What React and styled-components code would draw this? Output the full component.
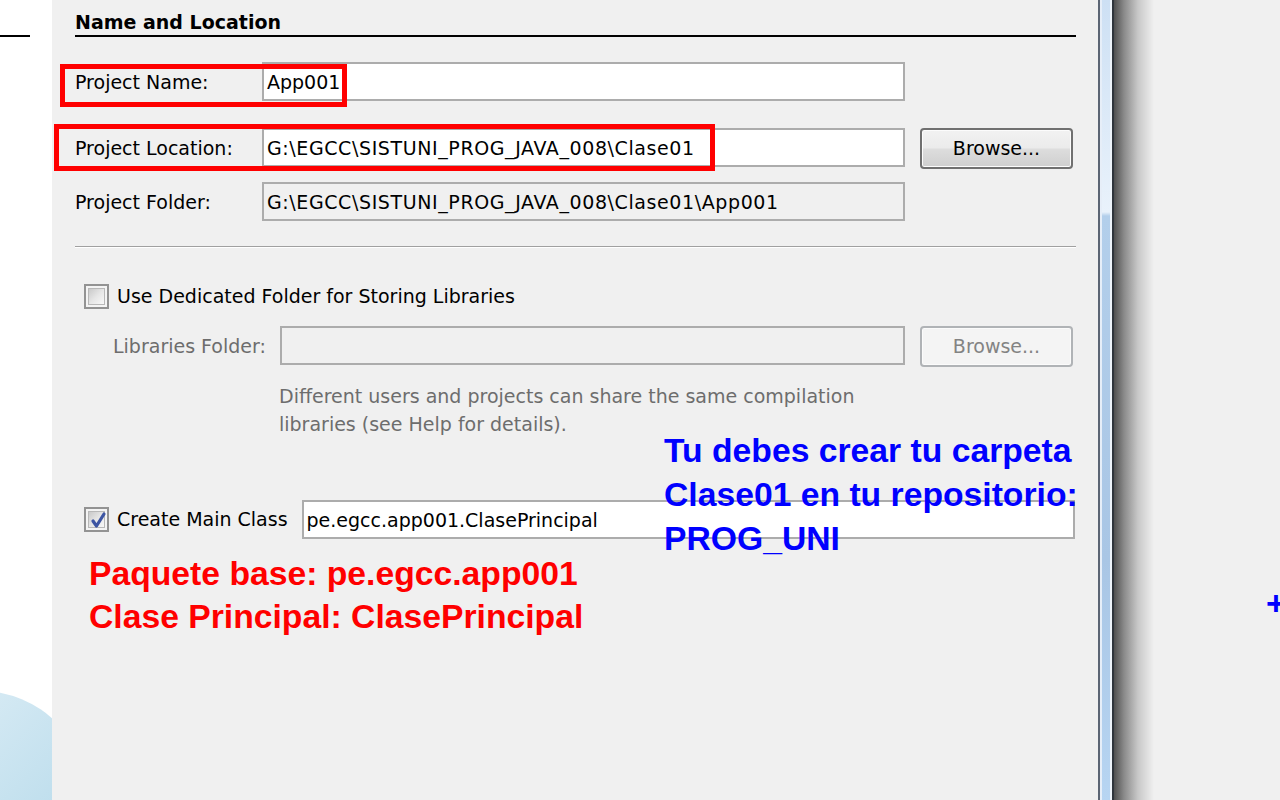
import React from "react";
import styled, { createGlobalStyle } from "styled-components";

const GlobalStyle = createGlobalStyle`
  html, body {
    margin: 0;
    padding: 0;
    background: #f0f0f0;
    overflow: hidden;
  }
`;

const Screen = styled.div`
  display: flex;
  width: 1280px;
  height: 800px;
  overflow: hidden;
`;

const Margin = styled.aside`
  width: 52px;
  flex-shrink: 0;
  background: #ffffff;
  display: flex;
  flex-direction: column;
  justify-content: space-between;
`;

const MarginRule = styled.div`
  margin-top: 35px;
  width: 30px;
  height: 2px;
  background: #000000;
`;

const Dialog = styled.main`
  position: relative;
  width: 1046px;
  flex-shrink: 0;
  box-sizing: border-box;
  padding-left: 23px;
  background: #f0f0f0;
  font-family: "DejaVu Sans", "Liberation Sans", sans-serif;
  font-size: 19px;
  color: #000000;
`;

const Header = styled.div`
  width: 1001px;
  padding-top: 10px;
  height: 25px;
  line-height: 25px;
  border-bottom: 2px solid #000000;
  font-weight: bold;
`;

const Row = styled.div`
  display: flex;
  align-items: ${(p) => p.$align || "flex-start"};
  margin-top: ${(p) => p.$top}px;
  padding-left: ${(p) => p.$indent || 0}px;
`;

const Label = styled.span`
  width: ${(p) => p.$width}px;
  height: 39px;
  flex-shrink: 0;
  line-height: 41px;
  white-space: nowrap;
  color: ${(p) => (p.$disabled ? "#6d6d6d" : "#000000")};
`;

const TextBox = styled.div`
  width: ${(p) => p.$width}px;
  height: 39px;
  flex-shrink: 0;
  box-sizing: border-box;
  border: 2px solid #acacac;
  background: ${(p) => (p.$muted ? "#f0f0f0" : "#ffffff")};
  padding-left: 3px;
  line-height: 36px;
  white-space: nowrap;
  overflow: hidden;
  letter-spacing: ${(p) => (p.$wide ? "0.6px" : "0")};
  margin-left: ${(p) => p.$gap || 0}px;
`;

const Button = styled.div`
  width: 153px;
  height: 41px;
  margin-left: 15px;
  flex-shrink: 0;
  box-sizing: border-box;
  border: 2px solid ${(p) => (p.$disabled ? "#b0b3b6" : "#707070")};
  border-radius: 4px;
  box-shadow: inset 0 0 0 1px ${(p) => (p.$disabled ? "#fbfbfb" : "#fcfcfc")};
  background: ${(p) =>
    p.$disabled
      ? "#f4f4f4"
      : "linear-gradient(to bottom, #f2f2f2 0%, #ebebeb 48%, #dddddd 52%, #cfcfcf 100%)"};
  color: ${(p) => (p.$disabled ? "#838383" : "#000000")};
  text-align: center;
  line-height: 37px;
`;

const Separator = styled.div`
  width: 1001px;
  margin-top: 25px;
  height: 1px;
  background: #a0a0a0;
  border-bottom: 1px solid #ffffff;
`;

const CheckText = styled.span`
  margin-left: 8px;
  line-height: 25px;
  white-space: nowrap;
`;

const Box = styled.span`
  position: relative;
  display: inline-flex;
  width: 25px;
  height: 25px;
  flex-shrink: 0;
  box-sizing: border-box;
  border: 2px solid #939393;
  background: #f4f4f4;
  padding: 2px;
`;

const BoxInner = styled.span`
  flex: 1;
  border: 1px solid #b8b8b8;
  background: linear-gradient(135deg, #c9c9c9 0%, #e6e6e6 50%, #f8f8f8 100%);
`;

const Tick = styled.svg`
  position: absolute;
  left: 2px;
  top: 1px;
`;

const Help = styled.p`
  margin: 15px 0 0 204px;
  line-height: 28px;
  color: #6d6d6d;
`;

const Note = styled.div`
  font-family: "Liberation Sans", Arial, sans-serif;
  font-weight: bold;
  font-size: 33.7px;
  line-height: ${(p) => p.$lh}px;
  color: ${(p) => p.$color};
  white-space: nowrap;
`;

const RedNote = styled(Note)`
  margin: 13px 0 0 14px;
`;

const BlueNote = styled(Note)`
  position: absolute;
  left: 612px;
  top: 428px;
`;

const Callout = styled.div`
  position: absolute;
  box-sizing: border-box;
  left: ${(p) => p.$x}px;
  top: ${(p) => p.$y}px;
  width: ${(p) => p.$w}px;
  height: ${(p) => p.$h}px;
  border: 5px solid #ff0000;
`;

const Frame = styled.div`
  display: flex;
  flex-shrink: 0;
  border-left: 2px solid #5b6574;
  border-right: 2px solid #2f353c;
`;

const FrameGlass = styled.div`
  width: 8px;
  border-left: 2px solid #e6eef8;
  border-right: 2px solid #eef4fb;
  background: linear-gradient(
    to bottom,
    #cde0f4 0px,
    #e9f2fb 212px,
    #b3cfeb 216px,
    #a9c6e5 560px,
    #b7d5f2 800px
  );
`;

const Shadow = styled.div`
  width: 40px;
  flex-shrink: 0;
  background: linear-gradient(to right, #505050 0%, #8a8a8a 25%, #c8c8c8 60%, #f0f0f0 100%);
`;

const Desktop = styled.div`
  flex: 1;
  overflow: hidden;
  background: #f0f0f0;
  padding: 584px 0 0 112px;
`;

const Plus = styled.span`
  font-family: "Liberation Sans", Arial, sans-serif;
  font-weight: bold;
  font-size: 34px;
  color: #0000ff;
`;

const Checkbox = ({ checked }) => (
  <Box>
    <BoxInner />
    {checked && (
      <Tick width="21" height="21" viewBox="0 0 21 21">
        <path d="M5 11 L8.5 16 L16 4" fill="none" stroke="#3d55a3" strokeWidth="3.2" strokeLinecap="round" strokeLinejoin="round" />
      </Tick>
    )}
  </Box>
);

const Bubble = () => (
  <svg width="52" height="112" viewBox="0 0 52 112">
    <defs>
      <linearGradient id="bubble" x1="0" y1="0" x2="1" y2="1">
        <stop offset="0" stopColor="#e4f1f8" />
        <stop offset="1" stopColor="#aed6e8" />
      </linearGradient>
    </defs>
    <circle cx="-20" cy="112" r="109" fill="url(#bubble)" />
  </svg>
);

export default function App() {
  return (
    <>
      <GlobalStyle />
      <Screen>
        <Margin>
          <MarginRule />
          <Bubble />
        </Margin>

        <Dialog>
          <Header>Name and Location</Header>

          <Row $top={25}>
            <Label $width={187}>Project Name:</Label>
            <TextBox $width={643}>App001</TextBox>
          </Row>

          <Row $top={27}>
            <Label $width={187}>Project Location:</Label>
            <TextBox $width={643} $wide>
              G:\EGCC\SISTUNI_PROG_JAVA_008\Clase01
            </TextBox>
            <Button>Browse...</Button>
          </Row>

          <Row $top={13}>
            <Label $width={187}>Project Folder:</Label>
            <TextBox $width={643} $muted $wide>
              G:\EGCC\SISTUNI_PROG_JAVA_008\Clase01\App001
            </TextBox>
          </Row>

          <Separator />

          <Row $top={36} $indent={9} $align="center">
            <Checkbox />
            <CheckText>Use Dedicated Folder for Storing Libraries</CheckText>
          </Row>

          <Row $top={17} $indent={38}>
            <Label $width={167} $disabled>
              Libraries Folder:
            </Label>
            <TextBox $width={625} $muted />
            <Button $disabled>Browse...</Button>
          </Row>

          <Help>
            Different users and projects can share the same compilation
            <br />
            libraries (see Help for details).
          </Help>

          <Row $top={62} $indent={9} $align="center">
            <Checkbox checked />
            <CheckText>Create Main Class</CheckText>
            <TextBox $width={773} $gap={14}>
              pe.egcc.app001.ClasePrincipal
            </TextBox>
          </Row>

          <RedNote $color="#ff0000" $lh={43}>
            Paquete base: pe.egcc.app001
            <br />
            Clase Principal: ClasePrincipal
          </RedNote>

          <BlueNote $color="#0000ff" $lh={44}>
            Tu debes crear tu carpeta
            <br />
            Clase01 en tu repositorio:
            <br />
            PROG_UNI
          </BlueNote>

          <Callout $x={8} $y={64} $w={287} $h={43} />
          <Callout $x={2} $y={124} $w={661} $h={47} />
        </Dialog>

        <Frame>
          <FrameGlass />
        </Frame>
        <Shadow />
        <Desktop>
          <Plus>+</Plus>
        </Desktop>
      </Screen>
    </>
  );
}
